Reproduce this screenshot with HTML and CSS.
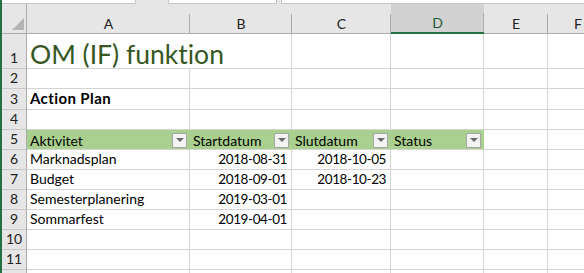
FILE: index.html
```html
<!DOCTYPE html>
<html lang="sv">
<head>
  <meta charset="UTF-8">
  <title>OM (IF) funktion</title>
  <link rel="stylesheet" href="styles.css">
</head>
<body>
  <div class="app">
    <div class="topbar">
      <div class="box box-name"></div>
      <div class="box box-mid"></div>
      <div class="box box-formula"></div>
    </div>

    <div class="sheet">
      <!-- column headers -->
      <div class="corner">
        <svg width="12" height="12" viewBox="0 0 12 12"><polygon points="12,0 12,12 0,12" fill="#b4b4b4"/></svg>
      </div>
      <div class="colhead">A</div>
      <div class="colhead">B</div>
      <div class="colhead">C</div>
      <div class="colhead active">D</div>
      <div class="colhead">E</div>
      <div class="colhead last">F</div>

      <!-- row 1 -->
      <div class="rowhead">1</div>
      <div class="cell title">OM (IF) funktion</div>
      <div class="cell"></div>
      <div class="cell"></div>
      <div class="cell"></div>
      <div class="cell"></div>
      <div class="cell"></div>

      <!-- row 2 -->
      <div class="rowhead">2</div>
      <div class="cell"></div><div class="cell"></div><div class="cell"></div><div class="cell"></div><div class="cell"></div><div class="cell"></div>

      <!-- row 3 -->
      <div class="rowhead">3</div>
      <div class="cell bold">Action Plan</div>
      <div class="cell"></div><div class="cell"></div><div class="cell"></div><div class="cell"></div><div class="cell"></div>

      <!-- row 4 -->
      <div class="rowhead">4</div>
      <div class="cell"></div><div class="cell"></div><div class="cell"></div><div class="cell"></div><div class="cell"></div><div class="cell"></div>

      <!-- row 5: table header -->
      <div class="rowhead">5</div>
      <div class="cell th"><span>Aktivitet</span><span class="filter"></span></div>
      <div class="cell th"><span>Startdatum</span><span class="filter"></span></div>
      <div class="cell th"><span>Slutdatum</span><span class="filter"></span></div>
      <div class="cell th"><span>Status</span><span class="filter"></span></div>
      <div class="cell"></div><div class="cell"></div>

      <!-- row 6 -->
      <div class="rowhead">6</div>
      <div class="cell">Marknadsplan</div>
      <div class="cell num">2018-08-31</div>
      <div class="cell num">2018-10-05</div>
      <div class="cell"></div><div class="cell"></div><div class="cell"></div>

      <!-- row 7 -->
      <div class="rowhead">7</div>
      <div class="cell">Budget</div>
      <div class="cell num">2018-09-01</div>
      <div class="cell num">2018-10-23</div>
      <div class="cell"></div><div class="cell"></div><div class="cell"></div>

      <!-- row 8 -->
      <div class="rowhead">8</div>
      <div class="cell">Semesterplanering</div>
      <div class="cell num">2019-03-01</div>
      <div class="cell"></div><div class="cell"></div><div class="cell"></div><div class="cell"></div>

      <!-- row 9 -->
      <div class="rowhead">9</div>
      <div class="cell">Sommarfest</div>
      <div class="cell num">2019-04-01</div>
      <div class="cell"></div><div class="cell"></div><div class="cell"></div><div class="cell"></div>

      <!-- row 10 -->
      <div class="rowhead">10</div>
      <div class="cell"></div><div class="cell"></div><div class="cell"></div><div class="cell"></div><div class="cell"></div><div class="cell"></div>

      <!-- row 11 -->
      <div class="rowhead">11</div>
      <div class="cell"></div><div class="cell"></div><div class="cell"></div><div class="cell"></div><div class="cell"></div><div class="cell"></div>

      <!-- row 12, only its top edge is in view -->
      <div class="rowhead"></div>
      <div class="cell"></div><div class="cell"></div><div class="cell"></div><div class="cell"></div><div class="cell"></div><div class="cell"></div>
    </div>
  </div>
</body>
</html>
```

FILE: styles.css
```css
* {
  box-sizing: border-box;
}
body {
  margin: 0;
  background: #ffffff;
  font-family: Lato, "Open Sans", sans-serif;
  font-size: 14px;
  font-variant-ligatures: none;
  color: #000;
  overflow: hidden;
}
.app {
  width: 584px;
  height: 273px;
  border-left: 2px solid #217346;
  overflow: hidden;
}
.topbar {
  display: flex;
  height: 4px;
  background: #e6e6e6;
}
.box {
  background: #ffffff;
  border: 1px solid #c6c6c6;
  border-top: none;
  height: 4px;
}
.box-name {
  width: 134px;
  border-left: none;
}
.box-mid {
  width: 109px;
  margin-left: 32px;
}
.box-formula {
  flex: 1;
  margin-left: 4px;
  border-right: none;
}

.sheet {
  display: grid;
  grid-template-columns: 25px 163px 102px 99px 93px 64px 60px;
  grid-template-rows: 30px 35px 20px 21px repeat(9, 20px);
}

.corner {
  background: #e6e6e6;
  border-right: 1px solid #ababab;
  border-bottom: 1px solid #ababab;
  display: flex;
  align-items: flex-end;
  justify-content: flex-end;
  padding: 0 2px 3px 0;
}
.colhead {
  background: linear-gradient(#ababab, #ababab) right bottom / 1px 19px no-repeat, #e6e6e6;
  border-bottom: 1px solid #ababab;
  display: flex;
  align-items: center;
  justify-content: center;
  padding-top: 9px;
  font-size: 14px;
  color: #222;
}
.colhead.active {
  background: linear-gradient(#ababab, #ababab) right bottom / 1px 19px no-repeat, #d2d2d2;
  border-bottom: 2px solid #217346;
  color: #1e5a36;
}
.colhead.last {
  background: #e6e6e6;
}

.rowhead {
  background: #e6e6e6;
  border-right: 1px solid #ababab;
  border-bottom: 1px solid #c8c8c8;
  display: flex;
  align-items: flex-end;
  justify-content: center;
  padding-bottom: 2px;
  font-size: 14px;
  color: #222;
}

.cell {
  border-right: 1px solid #d4d4d4;
  border-bottom: 1px solid #d4d4d4;
  display: flex;
  align-items: flex-end;
  padding: 0 3px 2px 3px;
  white-space: nowrap;
  font-size: 14px;
}
.cell.num {
  justify-content: flex-end;
  font-size: 13.5px;
  letter-spacing: -0.4px;
  padding-right: 4px;
}
.cell.bold {
  font-weight: bold;
  font-size: 15px;
  letter-spacing: 0.4px;
}
.cell.title {
  font-size: 26.5px;
  line-height: 1;
  color: #375623;
  padding-bottom: 1px;
  border-right: none;
}
.cell.th {
  background: #a9d08e;
  border-right-color: #a9d08e;
  justify-content: space-between;
  align-items: center;
  padding: 1px 2px 0 3px;
}
.filter {
  width: 15px;
  height: 15px;
  background: #f3f3f3;
  border: 1px solid #a6a6a6;
  display: flex;
  align-items: center;
  justify-content: center;
}
.filter::after {
  content: "";
  border-left: 4px solid transparent;
  border-right: 4px solid transparent;
  border-top: 4px solid #6b6b6b;
}
```
